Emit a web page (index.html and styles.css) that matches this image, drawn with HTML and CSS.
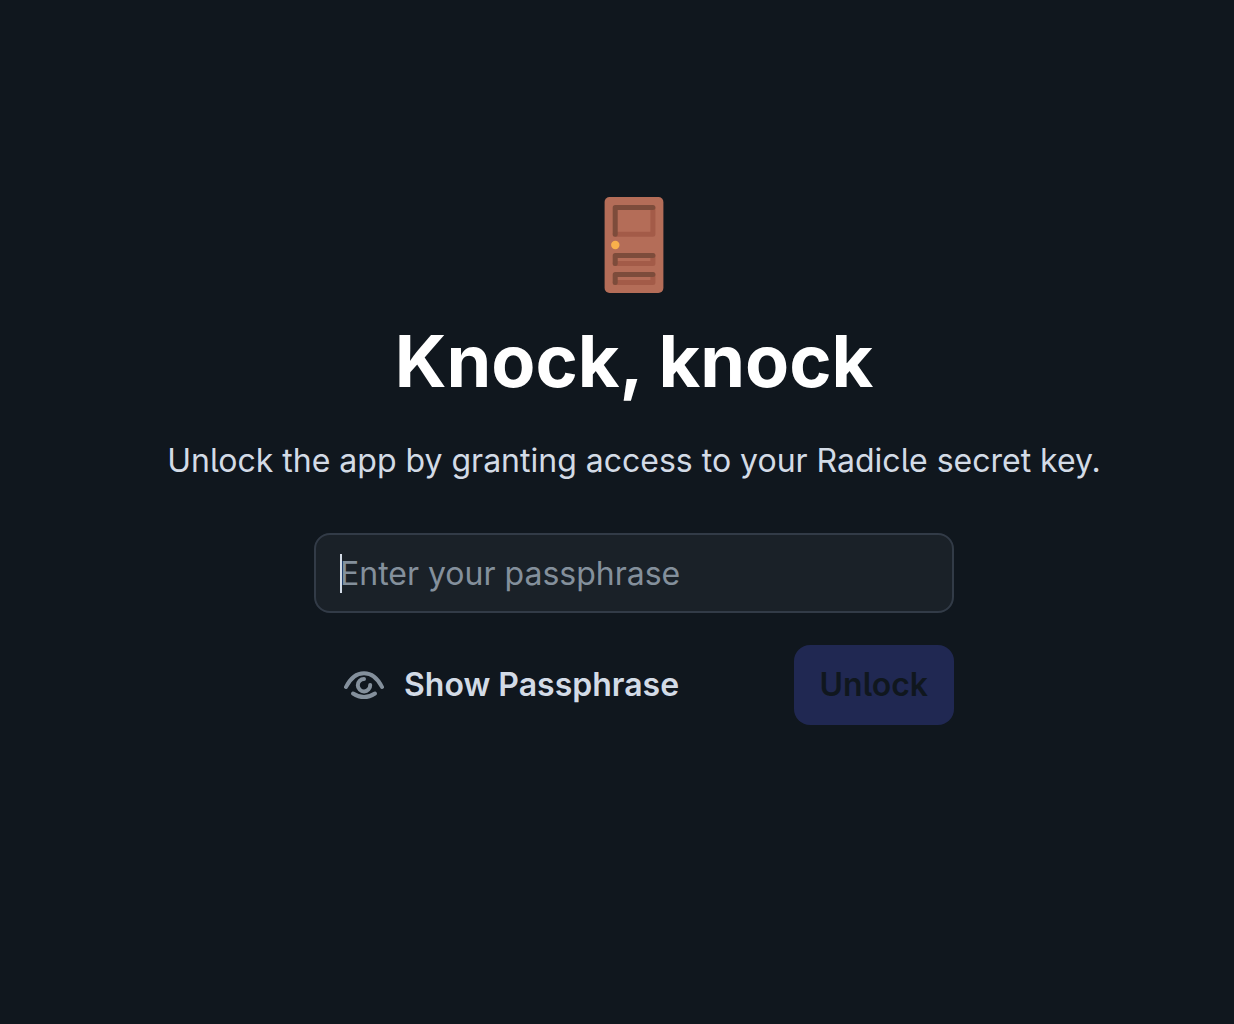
FILE: index.html
```
<!DOCTYPE html>
<html lang="en">
<head>
  <meta charset="UTF-8">
  <meta name="viewport" content="width=device-width, initial-scale=1.0">
  <title>Radicle</title>
  <link rel="stylesheet" href="styles.css">
</head>
<body>
  <main class="unlock">
    <svg class="door" viewBox="0 0 60 96" aria-hidden="true">
      <rect x="0.600" y="0" width="58.800" height="96" rx="5" fill="#b46d58"/>
      <g fill="none" stroke-width="5" stroke-linecap="round" stroke-linejoin="round">
        <path d="M11.200 37.300H48.900V11" stroke="#a35b48"/>
        <path d="M11.200 37.300V10.500H48.900" stroke="#7d4c3b"/>
        <path d="M11.200 66.500H48.900V58.500" stroke="#a35b48"/>
        <path d="M11.200 66.500V58.500H48.900" stroke="#7d4c3b"/>
        <path d="M11.200 85.500H48.900V77.500" stroke="#a35b48"/>
        <path d="M11.200 85.500V77.500H48.900" stroke="#7d4c3b"/>
      </g>
      <circle cx="11.300" cy="48" r="4.200" fill="#f9b04b"/>
    </svg>

    <h1 class="title">Knock, knock</h1>
    <p class="subtitle">Unlock the app by granting access to your Radicle secret key.</p>

    <form class="form">
      <div class="field">
        <input type="password" class="passphrase" placeholder="Enter your passphrase" aria-label="Passphrase">
        <span class="caret"></span>
      </div>
      <div class="actions">
        <button type="button" class="button toggle">
          <svg class="eye" viewBox="0 0 40 40" fill="none" stroke="currentColor" stroke-width="4" stroke-linecap="round" aria-hidden="true">
            <path d="M2 22C11 3.500 29 3.500 38 22"/>
            <path d="M9 28.500C16 33 24 33 31 28.500"/>
            <path d="M20 14A6.200 6.200 0 1 0 26.200 20"/>
          </svg>
          Show Passphrase
        </button>
        <button type="submit" class="button submit" disabled>Unlock</button>
      </div>
    </form>
  </main>
</body>
</html>
```
FILE: styles.css
```
* {
  margin: 0;
  padding: 0;
  box-sizing: border-box;
}

body {
  min-height: 100vh;
  display: flex;
  align-items: center;
  justify-content: center;
  padding: 0 0 102px 34px;
  font-family: Inter, sans-serif;
  font-size: 32px;
  line-height: 48px;
  font-feature-settings: "cv05";
  font-optical-sizing: none;
  background: #10171e;
  color: #d3dbe6;
}

.unlock {
  display: flex;
  flex-direction: column;
  align-items: center;
  text-align: center;
}

.door {
  width: 60px;
  height: 96px;
  margin-bottom: 24px;
}

.title {
  font-size: 72px;
  line-height: 88px;
  font-weight: 700;
  color: #fff;
  margin-bottom: 32px;
}

.subtitle {
  margin-bottom: 48px;
}

.form {
  width: 640px;
  max-width: 100%;
}

.field {
  position: relative;
  margin-bottom: 32px;
}

.passphrase {
  display: block;
  width: 100%;
  height: 80px;
  padding: 0 24px;
  border: 2px solid #323b47;
  border-radius: 16px;
  outline: none;
  background: #1a2128;
  color: inherit;
  font: inherit;
  font-feature-settings: inherit;
}

.passphrase::placeholder {
  color: #84909c;
  opacity: 1;
}

.caret {
  position: absolute;
  left: 26px;
  top: 21px;
  width: 2px;
  height: 39px;
  background: #d3dbe6;
}

.actions {
  display: flex;
  justify-content: space-between;
}

.button {
  display: flex;
  align-items: center;
  gap: 20px;
  height: 80px;
  padding: 0 26px;
  border: none;
  border-radius: 16px;
  font: inherit;
  font-weight: 600;
  font-feature-settings: inherit;
  cursor: pointer;
}

.toggle {
  padding: 0 30px;
  background: none;
  color: inherit;
}

.eye {
  width: 40px;
  height: 40px;
  color: #84909c;
}

.submit {
  background: #202852;
  color: #10171e;
}

.submit:disabled {
  cursor: not-allowed;
}
```
